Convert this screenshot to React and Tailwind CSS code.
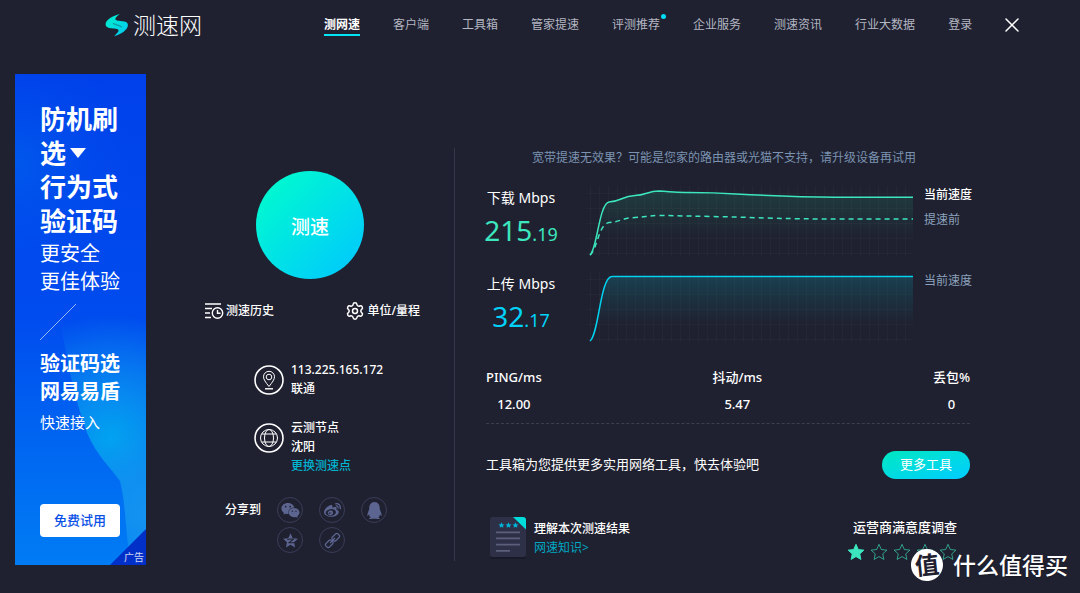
import React from 'react';
import clsx from 'clsx';
import { Settings, X } from 'lucide-react';
import { FaQq, FaWeibo, FaWeixin } from 'react-icons/fa';

const NAV = [
  { label: '测网速', active: true },
  { label: '客户端' },
  { label: '工具箱' },
  { label: '管家提速' },
  { label: '评测推荐', dot: true },
  { label: '企业服务' },
  { label: '测速资讯' },
  { label: '行业大数据' },
  { label: '登录' },
];

const METRICS = [
  { label: 'PING/ms', value: '12.00' },
  { label: '抖动/ms', value: '5.47' },
  { label: '丢包%', value: '0' },
];

const STAR = 'M12 1.8l3.1 6.9 7.4.8-5.5 5 1.5 7.4-6.5-3.8-6.5 3.8L7 14.5l-5.5-5 7.4-.8z';

const LogoMark = () => (
  <svg viewBox="0 0 24 24" className="h-6 w-6 shrink-0" aria-hidden="true">
    <defs>
      <linearGradient id="logo" x1="0" y1="0" x2="1" y2="1">
        <stop offset="0" stopColor="#00f0c8" />
        <stop offset="1" stopColor="#00c8f5" />
      </linearGradient>
    </defs>
    <path
      fill="url(#logo)"
      d="M14.800 1C8 2.800.6 6.800.6 11.200c0 3.200 3 3.600 6.200 4.100 4 .6 7.200.6 6.700 2.700-.5 1.700-2.800 3.500-4.500 5.200 6.500-1.500 13.900-6.500 13.900-11 0-3.200-3-3.600-6-3.900-4.200-.5-6.900-.7-6.500-2.700.4-1.600 2.700-3.200 4.400-4.600z"
    />
    <path d="M8.300 10.500c2.200 1.300 5.700 1.600 8.200 3.400" stroke="#1f2130" strokeWidth="1.2" fill="none" strokeLinecap="round" opacity=".35" />
  </svg>
);

const HistoryIcon = () => (
  <svg viewBox="0 0 20 18" className="h-[18px] w-5" fill="none" stroke="currentColor" strokeWidth="1.4" aria-hidden="true">
    <path d="M1 2h16M1 6.5h7M1 11h5M1 15.5h6" />
    <circle cx="13.5" cy="11" r="5.2" />
    <path d="M13.5 8v3.3h3" />
  </svg>
);

const PinIcon = () => (
  <svg viewBox="0 0 30 30" className="h-[30px] w-[30px] shrink-0" fill="none" stroke="currentColor" aria-hidden="true">
    <circle cx="15" cy="15" r="14" strokeWidth="1.6" />
    <path d="M15 21.5c-3.500-4.500-5.500-7-5.500-9.700a5.500 5.500 0 0 1 11 0c0 2.700-2 5.200-5.500 9.700z" />
    <circle cx="15" cy="12" r="2.8" />
    <path d="M11 23.8h8" strokeWidth="1.4" />
  </svg>
);

const GlobeIcon = () => (
  <svg viewBox="0 0 30 30" className="h-[30px] w-[30px] shrink-0" fill="none" stroke="currentColor" aria-hidden="true">
    <circle cx="15" cy="15" r="14" strokeWidth="1.6" />
    <circle cx="15" cy="15" r="8.5" />
    <ellipse cx="15" cy="15" rx="4.5" ry="8.5" />
    <path d="M7.5 11h15M7.5 19h15" />
  </svg>
);

const QzoneIcon = () => (
  <svg viewBox="0 0 24 24" className="h-[17px] w-[17px]" aria-hidden="true">
    <path fill="currentColor" d={STAR} />
    <path fill="none" stroke="#1f2130" strokeWidth="1.5" d="M7.5 10.5c3-.8 6-.8 8.500-.3l-6 4.800c3 .5 6 .4 9-.5" />
  </svg>
);

const ChainIcon = () => (
  <svg viewBox="0 0 24 24" className="h-[17px] w-[17px]" fill="none" stroke="currentColor" strokeWidth="1.8" aria-hidden="true">
    <g transform="rotate(-45 12 12)">
      <rect x="0" y="8.5" width="11" height="7" rx="2.5" />
      <rect x="13" y="8.5" width="11" height="7" rx="2.5" />
      <path d="M7 12h10" />
    </g>
  </svg>
);

const ReportIcon = () => (
  <svg viewBox="0 0 38 44" preserveAspectRatio="none" className="h-[42px] w-[38px]" aria-hidden="true">
    <rect x="1" y="2" width="36" height="42" rx="3" fill="#181a27" />
    <path d="M4 0h21l12 12v27a3 3 0 0 1-3 3H4a3 3 0 0 1-3-3V3a3 3 0 0 1 3-3z" fill="#2e3047" />
    <path d="M24 0h10a3 3 0 0 1 3 3v10z" fill="#00dcdc" />
    <g fill="#00b4d8">
      <path transform="translate(9 5) scale(.29)" d={STAR} />
      <path transform="translate(16 5) scale(.29)" d={STAR} />
      <path transform="translate(23 5) scale(.29)" d={STAR} />
    </g>
    <path d="M7 16h24M7 22.5h24M7 29h24M7 35.5h14" stroke="#5c5f7c" strokeWidth="1.8" />
  </svg>
);

const SHARE = [
  { name: '微信', icon: <FaWeixin size={19} /> },
  { name: '微博', icon: <FaWeibo size={17} /> },
  { name: 'QQ', icon: <FaQq size={17} /> },
  { name: 'QQ空间', icon: <QzoneIcon /> },
  { name: '复制链接', icon: <ChainIcon /> },
];

const Header = () => (
  <header className="flex h-[50px] items-center pl-[105px]">
    <a href="#" className="flex w-[219px] shrink-0 items-center gap-1">
      <LogoMark />
      <span className="text-[23px] leading-6 font-light text-white">测速网</span>
    </a>
    <nav className="flex items-center gap-[33px] text-xs text-[#b4b6c2]">
      {NAV.map(item => (
        <a
          key={item.label}
          href="#"
          className={clsx(
            'relative border-b-2 pt-0.5 leading-[18px] whitespace-nowrap',
            item.active ? 'border-[#00e4f4] font-bold text-white' : 'border-transparent'
          )}
        >
          {item.label}
          {item.dot && <span className="absolute top-0 -right-1.5 h-[5px] w-[5px] rounded-full bg-[#00dcf5]" />}
        </a>
      ))}
    </nav>
    <button type="button" aria-label="关闭" className="ml-7 text-white">
      <X size={24} strokeWidth={1.5} />
    </button>
  </header>
);

const AdBanner = () => (
  <aside className="relative w-[131px] shrink-0 self-start overflow-hidden bg-linear-to-b from-[#0040ea] via-[#004cee] to-[#007cf4] px-[25px] py-7 text-white">
    <svg viewBox="0 0 131 491" preserveAspectRatio="none" className="absolute inset-0 h-full w-full" aria-hidden="true">
      <defs>
        <radialGradient id="adGlow" gradientUnits="userSpaceOnUse" cx="96" cy="365" r="125">
          <stop offset="0" stopColor="#00a4f0" />
          <stop offset=".35" stopColor="#0892f0" stopOpacity=".85" />
          <stop offset="1" stopColor="#1090f0" stopOpacity="0" />
        </radialGradient>
        <radialGradient id="adLow" gradientUnits="userSpaceOnUse" cx="131" cy="440" r="90">
          <stop offset="0" stopColor="#1494f0" />
          <stop offset="1" stopColor="#1494f0" stopOpacity="0" />
        </radialGradient>
        <radialGradient id="adSide" gradientUnits="userSpaceOnUse" cx="0" cy="90" r="120">
          <stop offset="0" stopColor="#0068ec" stopOpacity=".55" />
          <stop offset="1" stopColor="#0050ec" stopOpacity="0" />
        </radialGradient>
      </defs>
      <rect width="131" height="491" fill="url(#adSide)" />
      <path d="M131 230v261H115l-3-30c-2-20-3-40-7-54-10-14-24-27-32-46-8-20-20-60-30-131z" fill="url(#adGlow)" />
      <path d="M131 330v161H115l-3-30c-2-20-3-40-7-54-10-14-24-27-32-46z" fill="url(#adLow)" />
      <path d="M131 455v36H95z" fill="#0030c8" />
    </svg>
    <div className="relative flex flex-col">
      <p className="text-[26px] leading-[34px] font-bold">
        防机刷<br />
        <span className="flex items-center gap-1">
          选
          <svg viewBox="0 0 16 10" className="h-2.5 w-4" aria-hidden="true">
            <path d="M0 0h16L8 10z" fill="currentColor" />
          </svg>
        </span>
        行为式<br />验证码
      </p>
      <p className="mt-0.5 text-xl leading-7 whitespace-nowrap">更安全<br />更佳体验</p>
      <svg viewBox="0 0 36 36" className="mt-2 h-9 w-9" aria-hidden="true">
        <path d="M0 36L36 0" stroke="#fff" strokeOpacity=".6" />
      </svg>
      <p className="mt-2.5 text-xl leading-7 font-bold whitespace-nowrap">验证码选<br />网易易盾</p>
      <p className="mt-1.5 text-[15px] leading-5">快速接入</p>
      <button type="button" className="mt-[72px] h-[33px] w-20 rounded-sm bg-white text-[13px] font-medium text-[#0a50e6]">
        免费试用
      </button>
    </div>
    <span className="absolute right-0.5 bottom-0 text-[10px] leading-4 text-white/80">广告</span>
  </aside>
);

const ControlPanel = () => (
  <section className="ml-5 flex w-72 shrink-0 flex-col items-center pt-[97px] text-xs font-medium text-white">
    <button
      type="button"
      className="h-[108px] w-[108px] rounded-full bg-linear-to-br from-[#00ffc8] to-[#00c4ff] pt-1.5 text-[19px] font-medium"
    >
      测速
    </button>

    <div className="mt-[22px] flex w-[220px] justify-between pl-1">
      <button type="button" className="flex items-center gap-0.5"><HistoryIcon />测速历史</button>
      <button type="button" className="flex items-center gap-0.5"><Settings size={20} strokeWidth={1.8} />单位/量程</button>
    </div>

    <div className="mt-[39px] flex w-full flex-col gap-5 pl-22 leading-[19px]">
      <div className="flex gap-[7px]">
        <div className="pt-[5px]"><PinIcon /></div>
        <p>113.225.165.172<br />联通</p>
      </div>
      <div className="flex gap-[7px]">
        <div className="pt-[5px]"><GlobeIcon /></div>
        <p>云测节点<br />沈阳<br /><a href="#" className="text-[#00b4d0]">更换测速点</a></p>
      </div>
    </div>

    <div className="mt-[22px] flex w-[170px] gap-4">
      <span className="leading-[26px] whitespace-nowrap">分享到</span>
      <div className="grid shrink-0 grid-cols-3 gap-x-4 gap-y-1">
        {SHARE.map(s => (
          <button
            key={s.name}
            type="button"
            aria-label={s.name}
            className="flex h-[26px] w-[26px] items-center justify-center rounded-full border border-[#3a3d58] text-[#5c6490]"
          >
            {s.icon}
          </button>
        ))}
      </div>
    </div>
  </section>
);

const ChartGrid = () => (
  <g stroke="#c8c896" strokeOpacity=".035">
    {[7.5, 22.5, 37.5, 52.5, 67.5].map(y => <path key={y} d={`M0 ${y}H327`} />)}
    {Array.from({ length: 36 }, (_, i) => <path key={i} d={`M${4.5 + i * 9} 0V70`} />)}
  </g>
);

const DownloadChart = () => (
  <svg viewBox="0 0 327 72" preserveAspectRatio="none" className="h-[72px] w-full" fill="none" role="img" aria-label="下载速度">
    <defs>
      <linearGradient id="down" x1="0" y1="0" x2="0" y2="1">
        <stop offset="0" stopColor="#1ee6a0" stopOpacity=".14" />
        <stop offset=".75" stopColor="#1ee6a0" stopOpacity="0" />
      </linearGradient>
    </defs>
    <ChartGrid />
    <path fill="url(#down)" d="M4 69C11 64 13 18 23 16C34 16 36 10 49 9.500C60 9 62 5 73 5C84 5.500 90 7 103 6.500C120 6.500 135 7 150 8C190 10 220 11 249 11.200H327V69z" />
    <g stroke="#3ce6be" strokeWidth="1.5">
      <path d="M4 69C11 64 13 18 23 16C34 16 36 10 49 9.500C60 9 62 5 73 5C84 5.500 90 7 103 6.500C120 6.500 135 7 150 8C190 10 220 11 249 11.200H327" />
      <path strokeDasharray="5 4" d="M4 69C12 62 12 39 23 36.500C34 36 36 32 49 31.500C60 31 62 29.500 73 29.500C84 29.500 120 30.500 150 31C190 32.500 220 33 249 33H327" />
    </g>
  </svg>
);

const UploadChart = () => (
  <svg viewBox="0 0 327 72" preserveAspectRatio="none" className="h-[72px] w-full" fill="none" role="img" aria-label="上传速度">
    <defs>
      <linearGradient id="up" x1="0" y1="0" x2="0" y2="1">
        <stop offset="0" stopColor="#00c8dc" stopOpacity=".18" />
        <stop offset=".75" stopColor="#00c8dc" stopOpacity="0" />
      </linearGradient>
    </defs>
    <ChartGrid />
    <path fill="url(#up)" d="M4 69C13 62 14 5 26 4.500H327V69z" />
    <path stroke="#00d2f0" strokeWidth="1.5" d="M4 69C13 62 14 5 26 4.500H327" />
  </svg>
);

const SpeedRow = ({ label, whole, decimal, color, chart, children }) => (
  <div className="flex">
    <div className="w-[70px] shrink-0 pt-0.5 text-center whitespace-nowrap">
      <p className="text-sm leading-5 text-white">{label}</p>
      <p className={clsx('mt-1.5 flex items-baseline justify-center text-[28px] leading-8', color)}>
        {whole}<span className="text-lg leading-8">.{decimal}</span>
      </p>
    </div>
    <div className="ml-[30px] min-w-0 flex-1">{chart}</div>
    <div className="ml-[11px] w-[46px] shrink-0 pt-px text-xs leading-4 whitespace-nowrap text-[#8ca2bd]">{children}</div>
  </div>
);

const Results = () => (
  <section className="mt-[74px] flex-1 self-start border-l border-[#34374a] pr-[110px] pl-[31px] text-white">
    <p className="pr-2 pt-px text-center text-xs leading-[18px] whitespace-nowrap text-[#7b93b0]">
      宽带提速无效果？可能是您家的路由器或光猫不支持，请升级设备再试用
    </p>

    <div className="mt-[19px] flex flex-col gap-3.5">
      <SpeedRow label="下载 Mbps" whole="215" decimal="19" color="text-[#3ce6be]" chart={<DownloadChart />}>
        <p className="font-medium text-white">当前速度</p>
        <p className="mt-[9px]">提速前</p>
      </SpeedRow>
      <SpeedRow label="上传 Mbps" whole="32" decimal="17" color="text-[#00d2fa]" chart={<UploadChart />}>
        <p>当前速度</p>
      </SpeedRow>
    </div>

    <dl className="mt-6 flex justify-between border-b border-dashed border-[#3c3f52] pb-2.5 text-center text-[13px] leading-[18px] font-medium">
      {METRICS.map(m => (
        <div key={m.label}>
          <dt>{m.label}</dt>
          <dd className="mt-[9px]">{m.value}</dd>
        </div>
      ))}
    </dl>

    <div className="mt-[27px] flex items-center justify-between text-[13px]">
      <p className="whitespace-nowrap">工具箱为您提供更多实用网络工具，快去体验吧</p>
      <button type="button" className="h-7 w-[88px] rounded-full bg-linear-to-br from-[#00e8c0] to-[#00ccff]">更多工具</button>
    </div>

    <div className="mt-[38px] flex items-start justify-between">
      <div className="flex gap-[7px] pl-[3px]">
        <ReportIcon />
        <div className="pt-0.5 text-xs leading-[19px]">
          <p className="font-medium">理解本次测速结果</p>
          <a href="#" className="text-[#00a8c4]">网速知识&gt;</a>
        </div>
      </div>
      <div className="pr-[13px]">
        <p className="text-[13px] leading-5 font-medium">运营商满意度调查</p>
        <div className="-ml-1.5 mt-1.5 flex h-[18px] gap-[5px]">
          {[1, 2, 3, 4, 5].map(n => (
            <button key={n} type="button" aria-label={`${n}星`} className="text-[#3ce6be]">
              <svg viewBox="0 0 24 24" className="h-[18px] w-[18px]" aria-hidden="true">
                <path
                  d={STAR}
                  fill={n === 1 ? 'currentColor' : 'none'}
                  stroke="currentColor"
                  strokeOpacity={n === 1 ? 1 : 0.65}
                  strokeWidth="1.3"
                />
              </svg>
            </button>
          ))}
        </div>
      </div>
    </div>
  </section>
);

const App = () => (
  <div className="relative min-h-screen overflow-hidden bg-[#1f2130] font-['Noto_Sans','Noto_Sans_CJK_SC',sans-serif]">
    <Header />
    <main className="flex pt-6 pl-[15px]">
      <AdBanner />
      <ControlPanel />
      <Results />
    </main>

    <div className="absolute right-3 bottom-3 flex items-center gap-2.5 text-white">
      <span className="flex h-8 w-8 -rotate-6 items-center justify-center rounded-full bg-white text-2xl leading-8 font-bold text-[#1f2130]">
        值
      </span>
      <span className="text-[23px] leading-8 font-medium text-shadow-sm">什么值得买</span>
    </div>
  </div>
);

export default App;
